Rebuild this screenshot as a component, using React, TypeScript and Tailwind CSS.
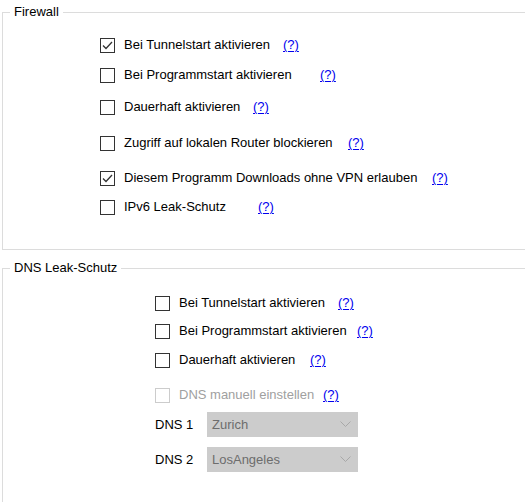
import React from "react";

const font = { fontFamily: '"Liberation Sans", Arial, sans-serif' };

function Box({ checked, disabled }: { checked?: boolean; disabled?: boolean }) {
  return (
    <span
      className={
        "flex h-[15px] w-[15px] shrink-0 items-center justify-center border bg-white " +
        (disabled ? "border-[#cccccc]" : "border-[#333333]")
      }
    >
      {checked && (
        <svg width="13" height="13" viewBox="0 0 13 13">
          <polyline points="2,6.5 5,9.5 11,3" fill="none" stroke="#333333" strokeWidth="1.3" />
        </svg>
      )}
    </span>
  );
}

function Help() {
  return <span className="text-[#0000ee] underline decoration-1 underline-offset-2">(?)</span>;
}

function Row({
  label,
  width,
  checked,
  disabled,
  mt,
}: {
  label: string;
  width: string;
  checked?: boolean;
  disabled?: boolean;
  mt: string;
}) {
  return (
    <div className={"flex h-[20px] items-center " + mt}>
      <label className={"flex shrink-0 items-center gap-[9px] " + width}>
        <Box checked={checked} disabled={disabled} />
        <span className={"whitespace-nowrap " + (disabled ? "text-[#a0a0a0]" : "text-black")}>{label}</span>
      </label>
      <Help />
    </div>
  );
}

function Combo({ label, value, mt }: { label: string; value: string; mt: string }) {
  return (
    <div className={"flex items-center " + mt}>
      <span className="w-[52px] shrink-0 text-black">{label}</span>
      <div className="flex h-[25px] w-[151px] items-center justify-between bg-[#cccccc] pl-[5px] pr-[7px] text-[#6d6d6d]">
        <span>{value}</span>
        <svg width="11" height="7" viewBox="0 0 11 7">
          <polyline points="0.5,0.5 5.5,5.5 10.5,0.5" fill="none" stroke="#a8a8a8" strokeWidth="1" />
        </svg>
      </div>
    </div>
  );
}

export default function App() {
  return (
    <div className="h-[502px] w-[525px] overflow-hidden bg-white text-[13px] leading-[16px]" style={font}>
      <fieldset className="ml-[2px] mt-[4px] w-[540px] border border-r-0 border-[#dcdcdc]">
        <legend className="ml-[7px] px-[4px] text-black">Firewall</legend>
        <div className="pb-[32px] pl-[97px] pt-[15px]">
          <Row label="Bei Tunnelstart aktivieren" width="w-[183px]" checked mt="mt-0" />
          <Row label="Bei Programmstart aktivieren" width="w-[220px]" mt="mt-[10px]" />
          <Row label="Dauerhaft aktivieren" width="w-[153px]" mt="mt-[12px]" />
          <Row label="Zugriff auf lokalen Router blockieren" width="w-[248px]" mt="mt-[16px]" />
          <Row label="Diesem Programm Downloads ohne VPN erlauben" width="w-[332px]" checked mt="mt-[15px]" />
          <Row label="IPv6 Leak-Schutz" width="w-[158px]" mt="mt-[9px]" />
        </div>
      </fieldset>
      <fieldset className="ml-[2px] mt-[10px] w-[540px] border border-r-0 border-[#dcdcdc]">
        <legend className="ml-[7px] px-[4px] text-black">DNS Leak-Schutz</legend>
        <div className="pb-[40px] pl-[152px] pt-[17px]">
          <Row label="Bei Tunnelstart aktivieren" width="w-[183px]" mt="mt-0" />
          <Row label="Bei Programmstart aktivieren" width="w-[202px]" mt="mt-[8px]" />
          <Row label="Dauerhaft aktivieren" width="w-[155px]" mt="mt-[9px]" />
          <Row label="DNS manuell einstellen" width="w-[168px]" disabled mt="mt-[15px]" />
          <Combo label="DNS 1" value="Zurich" mt="mt-[7px]" />
          <Combo label="DNS 2" value="LosAngeles" mt="mt-[10px]" />
        </div>
      </fieldset>
    </div>
  );
}
